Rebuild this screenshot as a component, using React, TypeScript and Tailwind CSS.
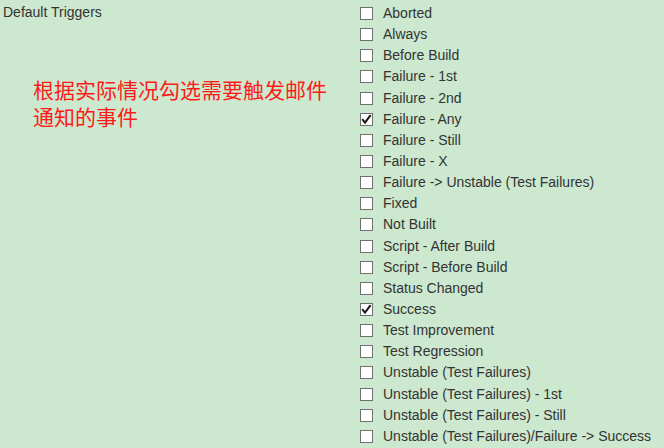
const triggers: { label: string; checked?: boolean }[] = [
  { label: "Aborted" },
  { label: "Always" },
  { label: "Before Build" },
  { label: "Failure - 1st" },
  { label: "Failure - 2nd" },
  { label: "Failure - Any", checked: true },
  { label: "Failure - Still" },
  { label: "Failure - X" },
  { label: "Failure -> Unstable (Test Failures)" },
  { label: "Fixed" },
  { label: "Not Built" },
  { label: "Script - After Build" },
  { label: "Script - Before Build" },
  { label: "Status Changed" },
  { label: "Success", checked: true },
  { label: "Test Improvement" },
  { label: "Test Regression" },
  { label: "Unstable (Test Failures)" },
  { label: "Unstable (Test Failures) - 1st" },
  { label: "Unstable (Test Failures) - Still" },
  { label: "Unstable (Test Failures)/Failure -> Success" },
]

function Box({ checked }: { checked?: boolean }) {
  return (
    <span className="w-[13px] h-[13px] border border-[#707070] bg-white flex items-center justify-center shrink-0">
      {checked && (
        <svg width="11" height="11" viewBox="0 0 11 11">
          <path d="M1.2 5.2 L4 8.6 L9.6 1.2" fill="none" stroke="#1a1a1a" strokeWidth="2.1" />
        </svg>
      )}
    </span>
  )
}

export default function App() {
  return (
    <div
      className="w-[664px] h-[448px] bg-[#cce8cf] flex text-[14px] text-[#333] overflow-hidden"
      style={{ fontFamily: '"Liberation Sans", Arial, sans-serif' }}
    >
      <div className="w-[360px] shrink-0">
        <div className="pl-[3px] pt-[3px] leading-[19px]">Default Triggers</div>
        <div
          className="ml-[33px] mt-[54px] text-[21px] leading-[27px] text-[#ff1a1a]"
          style={{ fontFamily: '"Noto Sans CJK SC", sans-serif' }}
        >
          <div>根据实际情况勾选需要触发邮件</div>
          <div>通知的事件</div>
        </div>
      </div>
      <ul className="pt-[3px]">
        {triggers.map((t) => (
          <li key={t.label} className="h-[21.15px] flex items-center">
            <Box checked={t.checked} />
            <span className="ml-[10px] whitespace-nowrap">{t.label}</span>
          </li>
        ))}
      </ul>
    </div>
  )
}
